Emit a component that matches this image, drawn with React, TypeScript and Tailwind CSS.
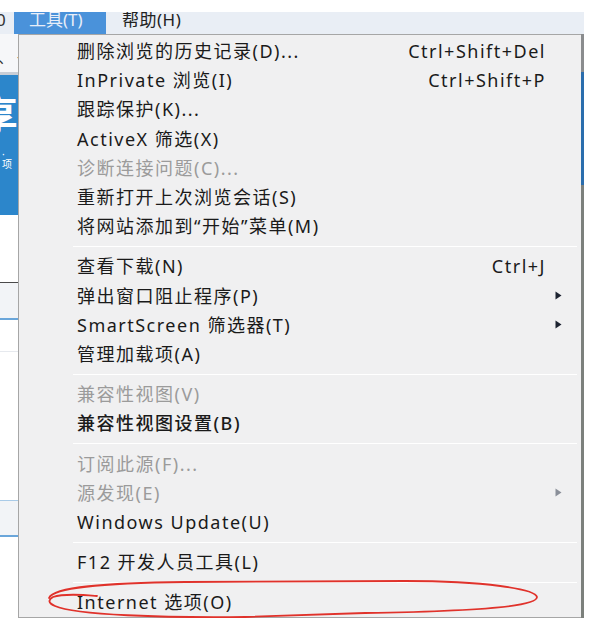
import React from "react";

type Row =
  | { kind: "item"; label: string; shortcut?: string; sub?: boolean; disabled?: boolean; bold?: boolean }
  | { kind: "sep" };

const rows: Row[] = [
  { kind: "item", label: "删除浏览的历史记录(D)...", shortcut: "Ctrl+Shift+Del" },
  { kind: "item", label: "InPrivate 浏览(I)", shortcut: "Ctrl+Shift+P" },
  { kind: "item", label: "跟踪保护(K)..." },
  { kind: "item", label: "ActiveX 筛选(X)" },
  { kind: "item", label: "诊断连接问题(C)...", disabled: true },
  { kind: "item", label: "重新打开上次浏览会话(S)" },
  { kind: "item", label: "将网站添加到“开始”菜单(M)" },
  { kind: "sep" },
  { kind: "item", label: "查看下载(N)", shortcut: "Ctrl+J" },
  { kind: "item", label: "弹出窗口阻止程序(P)", sub: true },
  { kind: "item", label: "SmartScreen 筛选器(T)", sub: true },
  { kind: "item", label: "管理加载项(A)" },
  { kind: "sep" },
  { kind: "item", label: "兼容性视图(V)", disabled: true },
  { kind: "item", label: "兼容性视图设置(B)", bold: true },
  { kind: "sep" },
  { kind: "item", label: "订阅此源(F)...", disabled: true },
  { kind: "item", label: "源发现(E)", disabled: true, sub: true },
  { kind: "item", label: "Windows Update(U)" },
  { kind: "sep" },
  { kind: "item", label: "F12 开发人员工具(L)" },
  { kind: "sep" },
  { kind: "item", label: "Internet 选项(O)" },
];

const font = "font-['Noto_Sans','Noto_Sans_CJK_SC',sans-serif]";

function Arrow({ grey }: { grey?: boolean }) {
  return (
    <svg width="7" height="9" viewBox="0 0 7 9">
      <path d="M0.5 0.5 L6.5 4.5 L0.5 8.5 Z" fill={grey ? "#8a8f99" : "#1c2230"} />
    </svg>
  );
}

export default function App() {
  return (
    <div className={`w-[610px] h-[626px] bg-white overflow-hidden flex flex-col ${font}`}>
      <div className="h-[12px] shrink-0" />

      {/* menu bar */}
      <div className="w-[584px] h-[22px] shrink-0 bg-[#e9eef5] flex overflow-hidden text-[17px] leading-[22px]">
        <div className="w-[18px] text-[#333] -mt-[3px] -ml-[4px]">0</div>
        <div className="w-[92px] bg-[#4a92da] text-[#e8eef8] pl-[15px] overflow-hidden">
          <span className="block -mt-[3px]">工具(T)</span>
        </div>
        <div className="pl-[16px] text-[#222] overflow-hidden tracking-[0.5px]">
          <span className="block -mt-[3px]">帮助(H)</span>
        </div>
      </div>

      <div className="flex">
        {/* page behind, left edge */}
        <div className="w-[18px] shrink-0 flex flex-col overflow-hidden">
          <div className="h-[38px] bg-[#f6f7f9] text-[15px] leading-[16px] pt-[15px] text-[#333] whitespace-nowrap -ml-[2px]">
            、 亻
          </div>
          <div className="h-[3px] bg-[#c9ced6]" />
          <div className="h-[140px] bg-[#2c86cb] text-white flex flex-col">
            <span className="text-[40px] leading-[40px] mt-[20px] -ml-[22px] font-bold">享</span>
            <span className="text-[10px] leading-[10px] mt-[14px] ml-[2px] tracking-[8px]">· 项</span>
          </div>
          <div className="h-[67px] bg-white" />
          <div className="h-[1px] bg-[#4a4a4a]" />
          <div className="h-[35px] bg-[#f2f4f7]" />
          <div className="h-[2px] bg-[#6aa6da]" />
          <div className="h-[32px] bg-white border-b border-[#e6e9ee]" />
          <div className="h-[148px] bg-white" />
          <div className="h-[1px] bg-[#a9cbe8]" />
          <div className="h-[34px] bg-[#f2f4f7]" />
          <div className="h-[2px] bg-[#6aa6da]" />
        </div>

        {/* dropdown */}
        <div className="relative w-[563px] h-[584px] shrink-0 bg-[#f0f0f1] border-l border-t border-b border-[#a6a6a6] pt-[1.5px] flex flex-col">
          {rows.map((r, i) =>
            r.kind === "sep" ? (
              <div key={i} className="h-[11px] flex items-center pl-[54px] pr-[4px]">
                <div className="h-[1px] w-full bg-[#e3e3e3] border-b border-white" />
              </div>
            ) : (
              <div
                key={i}
                className={`h-[29.2px] flex items-center pl-[58px] text-[18px] tracking-[1.5px] leading-none ${
                  r.disabled ? "text-[#9b9b9b]" : "text-[#1a1a1a]"
                } ${r.bold ? "font-medium" : ""}`}
              >
                <span className="flex-1 whitespace-nowrap">{r.label}</span>
                {r.shortcut && <span className="whitespace-nowrap">{r.shortcut}</span>}
                <span className="w-[35px] shrink-0 flex items-center pl-[9px]">
                  {r.sub && <Arrow grey={r.disabled} />}
                </span>
              </div>
            )
          )}

          {/* red annotation ring */}
          <svg
            className="absolute left-[26px] top-[540px] pointer-events-none"
            width="500"
            height="44"
            viewBox="0 0 500 44"
          >
            <path
              d="M4 23 C 8 12, 60 8, 140 7 L 360 6 C 440 6, 490 14, 492 22 C 492 31, 440 36, 320 38 L 200 42 C 120 43, 30 40, 10 31 C 3 28, 3 25, 8 22 C 20 18, 40 20, 52 21"
              fill="none"
              stroke="#e0322b"
              strokeWidth="1.8"
              strokeLinecap="round"
            />
          </svg>
        </div>

        {/* window edge behind, right */}
        <div className="w-[3px] shrink-0 flex flex-col">
          <div className="h-[38px] bg-[#8a8c8e]" />
          <div className="h-[113px] bg-[#2a6dad]" />
          <div className="h-[433px] bg-[#7c807c]" />
        </div>
      </div>
    </div>
  );
}
